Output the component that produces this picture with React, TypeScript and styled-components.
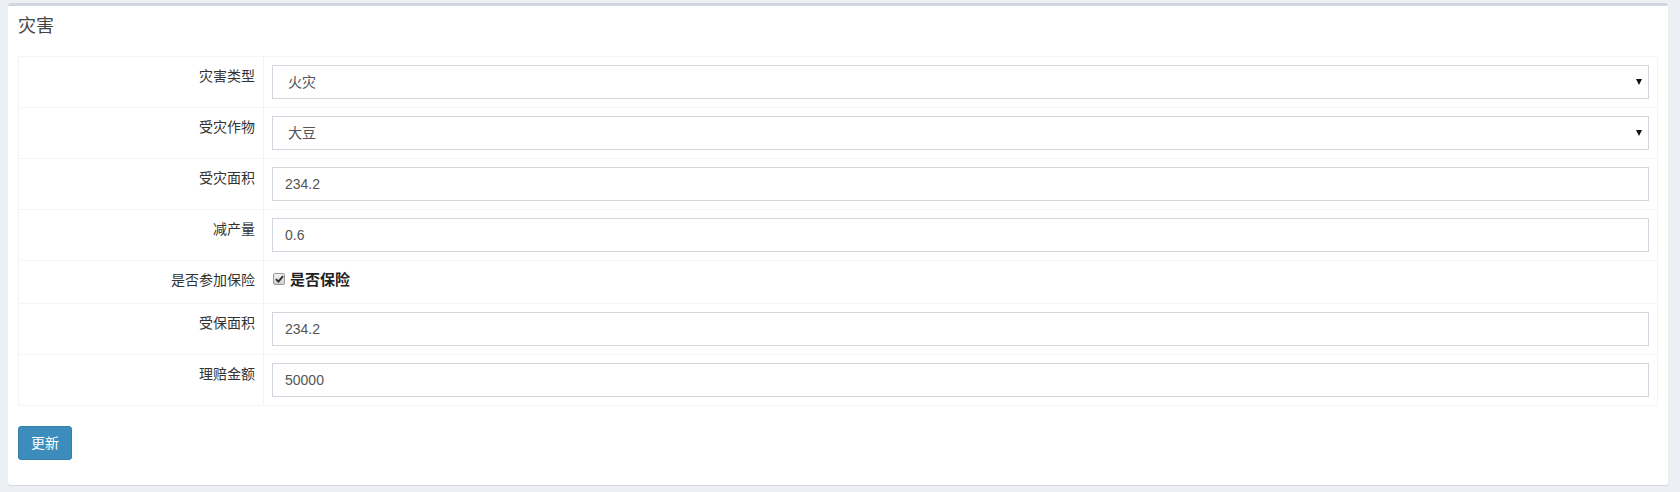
import React from "react";
import styled, { createGlobalStyle } from "styled-components";

const GlobalStyle = createGlobalStyle`
  html, body {
    margin: 0;
    padding: 0;
    background: #ecf0f5;
  }
  body {
    font-family: "Liberation Sans", Arial, "Noto Sans CJK SC", sans-serif;
    font-size: 14px;
    line-height: 20px;
    color: #333;
  }
  * { box-sizing: border-box; }
`;

const Page = styled.div`
  padding: 3px 12px 5px 8px;
`;

const Box = styled.section`
  background: #fff;
  border-top: 3px solid #d2d6de;
  border-radius: 3px;
  box-shadow: 0 1px 1px rgba(0, 0, 0, 0.1);
`;

const BoxHeader = styled.div`
  padding: 10px;
`;

const Title = styled.h3`
  margin: 0;
  font-size: 18px;
  line-height: 20px;
  font-weight: normal;
  color: #444;
`;

const BoxBody = styled.div`
  padding: 10px 10px 25px;
`;

const Table = styled.table`
  width: 100%;
  border-collapse: collapse;
  border: 1px solid #f4f4f4;
  margin-bottom: 20px;
`;

const Cell = styled.td`
  border: 1px solid #f4f4f4;
  padding: 8px;
  vertical-align: top;
  line-height: 20px;
`;

const LabelCell = styled(Cell)`
  width: 245px;
  text-align: right;
  color: #333;
  padding-top: 9px;
`;

const TextInput = styled.input`
  display: block;
  width: 100%;
  height: 34px;
  padding: 6px 12px;
  border: 1px solid #d2d6de;
  border-radius: 0;
  font-family: inherit;
  font-size: 14px;
  line-height: 20px;
  color: #555;
  background: #fff;
  outline: none;
`;

const SelectWrap = styled.div`
  position: relative;
`;

const Select = styled.select`
  display: block;
  width: 100%;
  height: 34px;
  padding: 6px 24px 6px 15px;
  border: 1px solid #d2d6de;
  border-radius: 0;
  font-family: inherit;
  font-size: 14px;
  line-height: 20px;
  color: #555;
  background: #fff;
  appearance: none;
  -webkit-appearance: none;
  outline: none;
`;

const Arrow = styled.span`
  position: absolute;
  right: 7px;
  top: 14px;
  width: 0;
  height: 0;
  border-left: 3px solid transparent;
  border-right: 3px solid transparent;
  border-top: 6px solid #111;
  pointer-events: none;
`;

const CheckLabel = styled.label`
  display: flex;
  align-items: flex-start;
  gap: 5px;
  height: 26px;
  overflow: hidden;
  font-weight: bold;
  font-size: 15px;
  line-height: 20px;
  color: #222;
`;

const CheckMark = styled.span`
  display: inline-flex;
  align-items: center;
  justify-content: center;
  flex: none;
  width: 12px;
  height: 12px;
  margin-top: 4px;
  margin-left: 1px;
  border: 1px solid #9a9a9a;
  border-radius: 2px;
  background: linear-gradient(#f2f2f2, #d0d0d0);
`;

const CheckText = styled.span`
  margin-top: 1px;
`;

const Button = styled.button`
  display: inline-block;
  padding: 6px 12px;
  font-family: inherit;
  font-size: 14px;
  line-height: 20px;
  color: #fff;
  background: #3c8dbc;
  border: 1px solid #367fa9;
  border-radius: 3px;
  cursor: pointer;
`;

type Row =
  | { label: string; kind: "select"; value: string }
  | { label: string; kind: "input"; value: string }
  | { label: string; kind: "check"; value: string };

const rows: Row[] = [
  { label: "灾害类型", kind: "select", value: "火灾" },
  { label: "受灾作物", kind: "select", value: "大豆" },
  { label: "受灾面积", kind: "input", value: "234.2" },
  { label: "减产量", kind: "input", value: "0.6" },
  { label: "是否参加保险", kind: "check", value: "是否保险" },
  { label: "受保面积", kind: "input", value: "234.2" },
  { label: "理赔金额", kind: "input", value: "50000" },
];

function Field({ row }: { row: Row }) {
  if (row.kind === "select") {
    return (
      <SelectWrap>
        <Select defaultValue={row.value}>
          <option value={row.value}>{row.value}</option>
        </Select>
        <Arrow />
      </SelectWrap>
    );
  }
  if (row.kind === "check") {
    return (
      <CheckLabel>
        <CheckMark role="checkbox" aria-checked="true">
          <svg width="9" height="8" viewBox="0 0 9 8">
            <path d="M1 4.2 L3.4 6.6 L8 1.2" fill="none" stroke="#2b2b2b" strokeWidth="1.8" />
          </svg>
        </CheckMark>
        <CheckText>{row.value}</CheckText>
      </CheckLabel>
    );
  }
  return <TextInput type="text" defaultValue={row.value} />;
}

export default function App() {
  return (
    <>
      <GlobalStyle />
      <Page>
        <Box>
          <BoxHeader>
            <Title>灾害</Title>
          </BoxHeader>
          <BoxBody>
            <Table>
              <tbody>
                {rows.map((row) => (
                  <tr key={row.label}>
                    <LabelCell>{row.label}</LabelCell>
                    <Cell>
                      <Field row={row} />
                    </Cell>
                  </tr>
                ))}
              </tbody>
            </Table>
            <Button type="button">更新</Button>
          </BoxBody>
        </Box>
      </Page>
    </>
  );
}
